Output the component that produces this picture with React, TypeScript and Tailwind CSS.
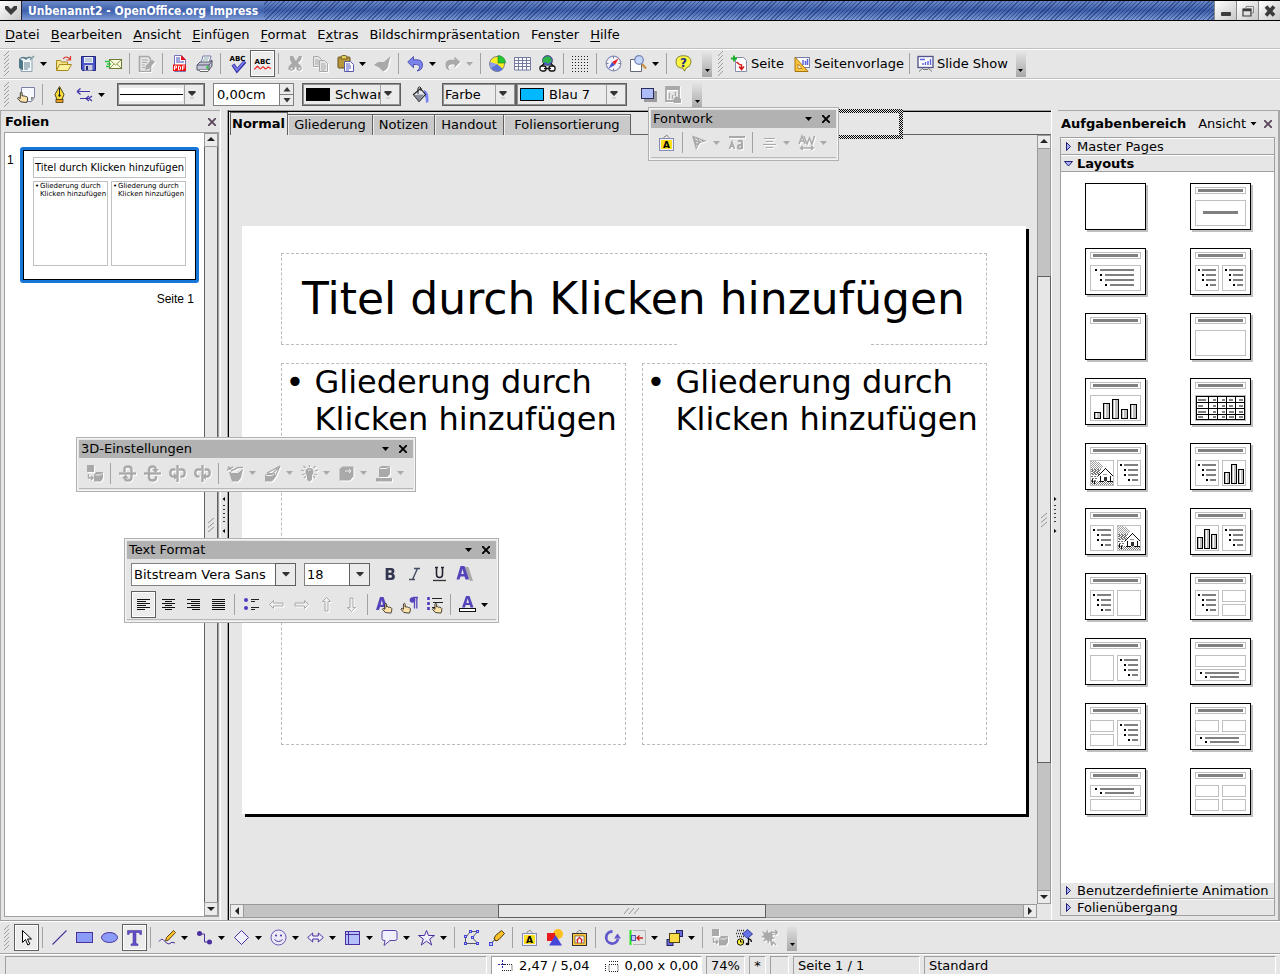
import type { ReactNode } from "react";

const G = "#a9a9a9";
const P = "#4a2f9e";
const B = "#8a9cf8";

const HAND = (
  <path
    d="M7.500 16.500L4 12.500l1-1 2 1.200V6.500l1-1 1 1v3.500l1-.5 1 .8 1-.3 1 .8 1-.2 1 1v3l-1 2.600z"
    fill="#ffe2a8"
    stroke="#111"
    strokeWidth=".9"
  />
);

const SIGN = (
  <>
    <path d="M5 4.500L8.500 1 12 4.500" fill="none" stroke="#444" strokeDasharray="1.500 .8" />
    <rect x="1.500" y="4.500" width="14" height="12" fill="#eef0ff" stroke="#888ab0" />
  </>
);

const CUBE_TO = (
  <>
    <rect x="1" y="0" width="7" height="7" fill={G} />
    <path d="M2.500 9v4h4M5 11l2 2-2 2" fill="none" stroke={G} strokeWidth="1.400" />
    <path d="M8 10l2-3h7v6l-2 3.500H8z" fill={G} />
    <path d="M9.500 10h5l2-2" fill="none" stroke="#eee" />
  </>
);

const ARROW_H = "M1.500 8.500l4-4v2.500h9.500v3H5.500v2.500z";

const icons: Record<string, ReactNode> = {
  newDoc: (
    <>
      <path d="M3 2.500h9l2 2v12H3z" fill="#f4f8fa" stroke="#8fa5b0" />
      <path d="M1 4q4-4 7-1 3-3 7 0-4-1-7 2-3-3-7-1z" fill="#5f8391" />
      <path d="M1 3.500l4 2.500v9.500l-4-2.500z" fill="#4d7686" />
      <path d="M6 8h6M6 10h6M6 12h6M6 14h4" stroke="#5f7f90" />
      <path d="M12 5l4-4" stroke="#7d99a4" strokeWidth="1.500" />
    </>
  ),
  open: (
    <>
      <path d="M1.500 15.500v-10h4l1 1.500h6v3" fill="#f6e58a" stroke="#a88a1c" />
      <path d="M1.500 15.500l3-6h12l-3.500 6z" fill="#fdf2a0" stroke="#a88a1c" />
      <path d="M8 4q3-4 7 0M15.500 1v4h-4" fill="none" stroke="#d6382a" strokeWidth="1.200" />
    </>
  ),
  save: (
    <>
      <path d="M1.500 1.500h14v14h-13l-1-1z" fill="#4a55c8" stroke="#23237c" />
      <rect x="4" y="2" width="9" height="6" fill="#e8ecff" />
      <path d="M5 4h7M5 6h7" stroke="#9aa" />
      <rect x="4.500" y="10" width="8" height="5.500" fill="#c8ccdc" />
      <rect x="6" y="11" width="2" height="4" fill="#24246c" />
    </>
  ),
  mail: (
    <>
      <rect x="4.500" y="4.500" width="12" height="9" fill="#fbfbe0" stroke="#6c7c38" />
      <path d="M5 5l5.500 5L16 5M5 13l4-4M16 13l-4-4" fill="none" stroke="#8a9a50" />
      <path d="M0 6.500h5M2 9h4M1 11.500h4" stroke="#27c43c" strokeWidth="1.400" />
    </>
  ),
  edit: (
    <>
      <path d="M1.500 1.500h9l2 2v13h-11z" fill="#e6e6e6" stroke={G} strokeWidth="1.600" />
      <path d="M4 5h6M4 7.500h5M4 10h3M4 12.500h3" stroke={G} />
      <path d="M7 15l1-4.500 6-6 3 2.500-6.500 7z" fill={G} />
    </>
  ),
  pdf: (
    <>
      <path d="M3.500.5h7l4 4v12h-11z" fill="#fff" stroke="#7773b8" />
      <path d="M10 0l5 5h-5z" fill="#e8121c" />
      <path d="M5 3h4M5 5h4M5 7h8" stroke="#4747b8" />
      <rect x="2" y="9.500" width="13" height="6.500" fill="#ee1111" />
      <path d="M3.500 15v-4h2v2h-2M7.500 11v4h1l1-1v-2l-1-1zM11.500 15v-4h2.500M11.500 13h2" fill="none" stroke="#fff" />
    </>
  ),
  print: (
    <>
      <path d="M5 8l2-7h8l-2 7z" fill="#fff" stroke="#7479a8" />
      <path d="M8 3h5M7 5h5" stroke="#8aa" />
      <path d="M1 10l3-3h9l3-2v6l-3 4H1z" fill="#c4c6d4" stroke="#55586c" />
      <path d="M1 10h12l3-4M13 10v5" fill="none" stroke="#55586c" />
      <path d="M3 15l1 1.500h8l1-1.500" fill="#fff" stroke="#666" />
      <circle cx="11.500" cy="12.500" r="1.200" fill="#1cc62c" />
    </>
  ),
  check: (
    <>
      <path d="M4 9.500l4 6 8-9" fill="none" stroke="#3232a0" strokeWidth="3.600" />
      <path d="M4.300 10l3.700 5 7.400-8.500" fill="none" stroke="#7d7df0" strokeWidth="1.800" />
    </>
  ),
  wave: (
    <path
      d="M0 14q1.500 0 2.500-2 1-1 2 0 1.500 3 3 1 1.500-2 2.500-.5 1.500 2.500 3 .5 1-1.500 2-.5l2 1"
      fill="none"
      stroke="#f02020"
      strokeWidth="1.200"
    />
  ),
  cut: (
    <>
      <path d="M3 1h3l3 5 3-5h3l-1 4-3 3 3 3 1 3-2 2-3-1-1-4-2 4-3 1-3-2 1-3 3-3-2-3z" fill={G} />
      <circle cx="4.500" cy="13.500" r="1" fill="#eee" />
      <circle cx="12.500" cy="13.500" r="1" fill="#eee" />
    </>
  ),
  copy: (
    <>
      <path d="M1.500 1.500h5l3 3v7h-8z" fill="#e6e6e6" stroke={G} />
      <path d="M3 5h4M3 7h4M3 9h4" stroke={G} />
      <path d="M7.500 5.500h5l3 3v8h-8z" fill="#e6e6e6" stroke={G} />
      <path d="M9 9h4M9 11h5M9 13h5M9 15h4" stroke={G} />
    </>
  ),
  paste: (
    <>
      <rect x="1" y="2" width="12" height="11" rx="1" fill="#b8963c" stroke="#66501a" />
      <path d="M4 3l1-2.500h4L10 3v1H4z" fill="#e2d058" stroke="#66501a" strokeWidth=".8" />
      <path d="M7.500 6.500h6l3 3v7h-9z" fill="#fff" stroke="#5858a8" />
      <path d="M9 9h4M9 11h5M9 13h5M9 15h3" stroke="#5858c8" />
    </>
  ),
  brush: <path d="M16.500 1l-2 8q0 5-5 7.500-2-1-4-3.500L0 10l4-3 6 0z" fill={G} />,
  undo: (
    <path
      d="M.7 7L6.500 1.500v3.300h4q5.500.5 5 6-.5 4.500-5.500 5.200 3-2 2.500-4.500-.5-2-3-2h-3v3.300z"
      fill="#7a84ea"
      stroke="#3c3ca4"
      strokeWidth=".8"
    />
  ),
  redo: (
    <path
      d="M16.300 7L10.500 1.500v3.300h-4q-5.500.5-5 6Q2 15.300 7 16q-3-2-2.500-4.500.5-2 3-2h3v3.300z"
      fill={G}
    />
  ),
  chart: (
    <>
      <circle cx="8" cy="9" r="7.500" fill="#fdee22" stroke="#667" strokeWidth=".8" />
      <path d="M8 9l6 5A8 8 0 0 1 1.500 13z" fill="#5a74d8" />
      <path d="M8 9L1.500 13A8 8 0 0 1 1 7z" fill="#8a9cf0" />
      <path d="M9 8V.5Q16 1 16.500 8z" fill="#22c832" stroke="#187820" strokeWidth=".6" />
    </>
  ),
  table: (
    <>
      <rect x="1" y="3" width="15" height="12" fill="#fff" />
      <path
        d="M.5 2.500h16v12.500H.5zM.5 5.500h16M.5 8.500h16M.5 11.500h16M4.500 2.500v12.500M8.500 2.500v12.500M12.500 2.500v12.500"
        fill="none"
        stroke="#7479a4"
      />
    </>
  ),
  link: (
    <>
      <circle cx="8.500" cy="5.500" r="5" fill="#4c5ad0" stroke="#223" strokeWidth=".6" />
      <path d="M4 4q3-4 7-2l2 4-4 3-2-2-3 1z" fill="#2cb444" />
      <g fill="#fff" stroke="#111" strokeWidth="1.300">
        <path d="M2 12l3-3.500M15 12l-3-3.500" fill="none" />
        <rect x="1" y="11" width="6" height="5" rx="2" />
        <rect x="10" y="11" width="6" height="5" rx="2" />
        <path d="M5 13.500h7" />
      </g>
    </>
  ),
  grid: (
    <g stroke="#222" strokeDasharray="1 2">
      <path d="M0 1.500h17M0 4.500h17M0 7.500h17M0 10.500h17M0 13.500h17M0 16.500h17" />
    </g>
  ),
  compass: (
    <>
      <circle cx="8.500" cy="8.500" r="7.300" fill="#f4f6ff" stroke="#8a90b4" strokeWidth="1.200" />
      <path d="M13.500 3.500L10 10 7 7z" fill="#e82222" />
      <path d="M3.500 13.500L7 7l3 3z" fill="#4a52d0" />
      <path d="M8.500 1.500v2M8.500 13.500v2M1.500 8.500h2M13.500 8.500h2" stroke="#778" />
    </>
  ),
  zoom: (
    <>
      <path d="M.5 4.500h8v3h3v9H.5z" fill="#fff" stroke="#667" />
      <path d="M12 9l4 4.500" stroke="#c89040" strokeWidth="2.200" />
      <circle cx="9" cy="5" r="4.300" fill="#c2d6fa" stroke="#7484b4" strokeWidth="1.200" />
    </>
  ),
  help: (
    <path
      d="M8.500.7q7.500 0 7.500 6.500 0 4-5 6l-1.500 3-1.500-3q-7 0-7-6.500Q1 .7 8.500.7z"
      fill="#fdf63c"
      stroke="#77772c"
      strokeWidth=".9"
    />
  ),
  slideNew: (
    <>
      <path d="M4.500 2.500h8l3 3v11h-11z" fill="#fff" stroke="#888ca8" />
      <path d="M0 3.500h6M3 .5v6" stroke="#18b028" strokeWidth="1.800" />
      <path d="M5.500 7q3 3 5 3v4M8 11.500l2.500 3 2.500-3" fill="none" stroke="#d41818" strokeWidth="1.500" />
    </>
  ),
  master: (
    <>
      <rect x="1.500" y="2.500" width="14" height="10" fill="#fff" stroke="#777ca8" />
      <path d="M9 10V5M11.500 10V6M13.500 10V4" stroke="#5a62dc" strokeWidth="1.500" />
      <path d="M1 16.500V2l13 14.500z" fill="#fac43c" stroke="#a87410" />
      <path d="M4 13.500V9l4 4.500z" fill="#fff" stroke="#a87410" strokeWidth=".8" />
    </>
  ),
  show: (
    <>
      <rect x="1" y="1.500" width="15" height="11" fill="#fff" stroke="#55588c" strokeWidth="1.400" />
      <path d="M3 4.500h5M6 10V8M8.500 10V7M11 10V6M13.500 10V4" stroke="#5a62dc" strokeWidth="1.400" />
      <path d="M6 13l-4 3.500M11 13l4 3.500M6 14.500h5" stroke="#777" fill="none" />
    </>
  ),
  styles: (
    <>
      <path d="M3.500 1.500h13v10l-3 4h-10z" fill="#f6f8fd" stroke="#7a80a4" />
      <path d="M16 11h-3v4z" fill="#888" />
      <g transform="translate(-4 1) scale(.9)">{HAND}</g>
    </>
  ),
  pen: (
    <>
      <path d="M8.500.5l4.500 8-2 5h-5l-2-5z" fill="#fbe03c" stroke="#4a3e10" />
      <path d="M8.500 2v8" stroke="#222" />
      <circle cx="8.500" cy="9.500" r="1.200" fill="#222" />
      <rect x="5" y="13.500" width="7" height="3" fill="#e89c28" stroke="#4a3e10" strokeWidth=".8" />
    </>
  ),
  ends: (
    <g fill="none" stroke="#4034a8" strokeWidth="1.200">
      <path d="M1 5.500h13M1 5.500l3.500-3M1 5.500l3.500 3" />
      <path d="M4 12.500h6M10 12.500l3-2.500M10 12.500l3 2.500M13 12.500l3-2.500M13 12.500l3 2.500M10 12.500h4" />
    </g>
  ),
  bucket: (
    <>
      <path d="M12 4q5 1 4.500 12l-2.500 1q0-6-2.500-9z" fill="#7884f4" />
      <path d="M1.500 8.500l7-6 5 6-6.500 7z" fill="#e4e6ec" stroke="#222" strokeWidth="1.100" />
      <path d="M2 9l10-.5-5 6.500z" fill="#888c98" />
      <path d="M6 8V2q1.500-2.500 3 0v3" fill="none" stroke="#222" />
    </>
  ),
  shadow: (
    <>
      <rect x="4" y="5" width="13" height="11" fill="#9a9aa0" />
      <rect x="1.500" y="2.500" width="12" height="10" fill="#aebcfa" stroke="#2a2e58" />
    </>
  ),
  interaction: (
    <>
      <path d="M1 1h13v14H1zM1 3h13" fill="none" stroke={G} strokeWidth="1.800" />
      <path d="M4.500 13V7M7.500 13V9M10.500 10V6" stroke={G} strokeWidth="1.500" />
      <path d="M8 14l3-4 5 3v4H9z" fill={G} />
    </>
  ),
  cursor: (
    <path d="M4.500 1.500v12l3-3 2.300 5.500 2-1-2.300-5h4z" fill="#fff" stroke="#000" strokeWidth="1" />
  ),
  line: <path d="M1.500 15.500l14-14" stroke={P} strokeWidth="1.100" />,
  rect: <rect x=".5" y="3.500" width="16" height="10" fill={B} stroke={P} />,
  ellipse: <ellipse cx="8.500" cy="8.500" rx="8" ry="5" fill={B} stroke={P} />,
  text: (
    <path
      d="M1.500 1.500h14v4h-1.500l-1-2H10v11l2 .5v1.500H5V15l2-.5v-11H4l-1 2H1.500z"
      fill="#6450c8"
      stroke="#3c2c90"
      strokeWidth=".5"
    />
  ),
  pencilCurve: (
    <>
      <path d="M0 12.500q3-4 5-1t5 3.500q3-3 6-1" fill="none" stroke={P} />
      <path d="M6.500 12l1-3.500 7-7 2 2-7 7.500z" fill="#fac02c" stroke="#4c3808" strokeWidth=".9" />
    </>
  ),
  connector: (
    <>
      <path d="M3.500 5h5v8h4" fill="none" stroke={P} />
      <circle cx="3.500" cy="4.500" r="2.500" fill={P} />
      <circle cx="13.500" cy="13" r="2.500" fill={P} />
    </>
  ),
  diamond: <path d="M8.500 1.500l7 7-7 7-7-7z" fill="#eef0ff" stroke={P} />,
  smiley: (
    <>
      <circle cx="8.500" cy="8.500" r="7.500" fill="#eceaf8" stroke="#6a54b4" />
      <circle cx="6" cy="6.500" r="1" fill={P} />
      <circle cx="11" cy="6.500" r="1" fill={P} />
      <path d="M4.500 10.500q4 4 8 0" fill="none" stroke={P} />
    </>
  ),
  arrows: (
    <path d="M.7 8.500l5-4.500v3h5.600V4l5 4.500-5 4.500v-3H5.700v3z" fill="#f2f2ff" stroke={P} />
  ),
  flow: (
    <>
      <rect x="1.500" y="2.500" width="14" height="13" fill="#b4c0fa" stroke={P} />
      <path d="M4.500 2.500v13M1.500 5.500h14" stroke={P} />
    </>
  ),
  callout: (
    <path
      d="M3 1.500h11q2 0 2 2v6q0 2-2 2H9l-6 5 1-5H3q-2 0-2-2v-6q0-2 2-2z"
      fill="#f0f0fc"
      stroke="#5c44ac"
    />
  ),
  star: (
    <path
      d="M8.500 1.500l2 5h6l-4.800 3.500 2 6-5.200-3.800-5.200 3.800 2-6L.5 6.500h6z"
      fill="#f0f0fc"
      stroke={P}
    />
  ),
  points: (
    <>
      <path d="M2.500 14.500h12l-5-6 5-6h-7l-5 6z" fill="none" stroke="#556" />
      <g fill="#c4ccff" stroke="#4444d8">
        <rect x="6.500" y="1.500" width="2" height="2" />
        <rect x="13.500" y="1.500" width="2" height="2" />
        <rect x="1.500" y="6.500" width="2" height="2" />
        <rect x="8.500" y="7.500" width="2" height="2" />
        <rect x="1.500" y="13.500" width="2" height="2" />
        <rect x="13.500" y="13.500" width="2" height="2" />
      </g>
    </>
  ),
  glue: (
    <>
      <path d="M6 10l1.500-3.500 6-5 3 3-5.500 6L8 12z" fill="#fac02c" stroke="#4c3808" />
      <path d="M7 10.500L3.500 14" stroke="#333" />
      <rect x="1.500" y="13.500" width="3" height="3" fill="#c4ccff" stroke="#4444d8" />
    </>
  ),
  sign: (
    <>
      {SIGN}
      <rect x="3" y="6" width="11" height="9" fill="#fde01c" />
    </>
  ),
  shapes: (
    <>
      <circle cx="12" cy="5" r="5" fill="#fcc020" />
      <rect x="1" y="4" width="8" height="8" fill="#e81c1c" />
      <path d="M9.500 6l6.500 10.500H3z" fill="#4848d8" />
    </>
  ),
  gallery: (
    <>
      {SIGN}
      <rect x="1.500" y="4.500" width="14" height="12" fill="#fcc83c" stroke="#333" />
      <rect x="4" y="7" width="9" height="7" fill="#fff" stroke="#333" strokeWidth=".6" />
      <path d="M5.500 11.500l3-3 3 3M6.500 11v3M10.500 11v3" fill="none" stroke="#d42020" strokeWidth="1.300" />
    </>
  ),
  rotate: (
    <>
      <path d="M8.500 2.500a6 6 0 1 0 5.500 7.500" fill="none" stroke="#6258cc" strokeWidth="2.800" />
      <path d="M10 9.500h7l-3.500-5z" fill="#6258cc" />
    </>
  ),
  align: (
    <>
      <path d="M1.500 1v15" stroke="#24e424" strokeWidth="2" />
      <path d="M4 1.500h12.500v14H4" fill="none" stroke="#b4b4b8" />
      <rect x="2.500" y="6.500" width="4" height="5" fill="#c4ccff" stroke="#5454b8" />
      <path d="M8 9h6M10.500 6.500L8 9l2.500 2.500" fill="none" stroke="#cc2020" strokeWidth="1.300" />
    </>
  ),
  order: (
    <>
      <rect x="10.500" y="1.500" width="6" height="6" fill="#6868dc" stroke="#22225c" />
      <rect x="1" y="10.500" width="6" height="6" fill="#6868dc" stroke="#22225c" />
      <rect x="3.500" y="4.500" width="10" height="9" fill="#fcdc44" stroke="#4c4414" />
    </>
  ),
  cubeTo: CUBE_TO,
  anim: (
    <>
      <path d="M1 1.500h7M0 4.500h7M1 7.500h7" stroke="#333" strokeDasharray="1 1" strokeWidth="1.300" />
      <path d="M11.500.5l5 4.500-5 4.500-5-4.500z" fill="#6474e8" stroke="#2c3890" />
      <circle cx="4.500" cy="13" r="3.200" fill="#fcf040" stroke="#111" />
      <path d="M4.500 11v2h2" fill="none" stroke="#111" />
      <path d="M12.500 15V9.500q3 1 3 3.500" fill="none" stroke="#111" strokeWidth="1.300" />
      <ellipse cx="11.500" cy="15" rx="1.800" ry="1.300" fill="#111" />
    </>
  ),
  effects: (
    <>
      <path
        d="M6 0l1.500 4L11 2l0 3 3 0-3 2 3 3-3 0 0 3-2-2-2 4-1-4-4 2 2-4-4-1 3-2-2-4 4 2z"
        fill={G}
      />
      <path d="M11 3.500h5M14 1l2.500 2.500L14 6M9 9l2 7 1-3 3 3" fill="none" stroke={G} strokeWidth="1.400" />
    </>
  ),
  bold: (
    <path
      fillRule="evenodd"
      d="M4 3h6q3.500 0 3.500 3 0 2-1.700 2.500 2.200.5 2.200 3 0 3.500-4 3.500H4zM7 5.200v2.500h2q1.500 0 1.500-1.300T9 5.200zM7 10v2.800h2.300q1.500 0 1.500-1.400T9.300 10z"
      fill="#32364e"
      transform="translate(1 -1) scale(.92 1)"
    />
  ),
  italic: <path d="M8 2.500h6M3 13.500h6M11.500 2.500l-5 11" stroke="#444c64" strokeWidth="1.400" fill="none" />,
  underline: (
    <>
      <path d="M4 1.500h3M10 1.500h3M5.500 1.500v6.500q0 3.500 3 3.500t3-3.500v-6.500" fill="none" stroke="#223" strokeWidth="1.600" />
      <path d="M2 14.500h13" stroke="#333" strokeWidth="1.300" />
    </>
  ),
  outlineA: (
    <>
      <path fillRule="evenodd" d="M9 1h3.500l4.500 14h-3l-1-2.500H10z" fill={G} />
      <path
        fillRule="evenodd"
        d="M4.500 0h4l4.500 13.500H9.500l-1-3h-4l-1 3H.5zM6.500 3l-1.300 5h2.600z"
        fill="#5444bc"
      />
    </>
  ),
  alignLeft: <path d="M2 3.500h13M2 5.500h9M2 7.500h13M2 9.500h9M2 11.500h13M2 13.500h8" stroke="#111" />,
  alignCenter: <path d="M2 3.500h13M5 5.500h7M2 7.500h13M5 9.500h7M2 11.500h13M5 13.500h7" stroke="#111" />,
  alignRight: <path d="M2 3.500h13M6 5.500h9M2 7.500h13M6 9.500h9M2 11.500h13M7 13.500h8" stroke="#111" />,
  justify: <path d="M2 3.500h13M2 5.500h13M2 7.500h13M2 9.500h13M2 11.500h13M2 13.500h13" stroke="#111" />,
  bullets: (
    <>
      <circle cx="3" cy="4" r="2" fill="#4c3cc4" />
      <circle cx="3" cy="12" r="2" fill="#4c3cc4" />
      <path d="M8 3.500h8M8 5.500h4M8 11.500h8M8 13.500h4" stroke="#222" />
    </>
  ),
  left: <path d={ARROW_H} fill="#f0f0f0" stroke={G} />,
  right: <path d={ARROW_H} fill="#f0f0f0" stroke={G} transform="rotate(180 8.500 8.500)" />,
  up: <path d={ARROW_H} fill="#f0f0f0" stroke={G} transform="rotate(90 8.500 8.500)" />,
  down: <path d={ARROW_H} fill="#f0f0f0" stroke={G} transform="rotate(270 8.500 8.500)" />,
  charHand: (
    <>
      <path fillRule="evenodd" d="M4 1h3.500l4.500 13H9l-1-3H4l-1 3H0zM5.800 4l-1.200 4.800h2.400z" fill="#5444bc" />
      <g transform="translate(3 2.500) scale(.85)">{HAND}</g>
    </>
  ),
  paraHand: (
    <>
      <path d="M12 1.500h5M13.500 1.500v11M15.800 1.500v11" stroke="#5444bc" strokeWidth="1.300" />
      <circle cx="11.500" cy="4" r="2.800" fill="#5444bc" />
      <g transform="translate(-3.500 2.500) scale(.85)">{HAND}</g>
    </>
  ),
  listHand: (
    <>
      <path d="M2.500 1v3M2.500 6v3M2.500 11v3" stroke="#4c3cc4" strokeWidth="2.600" />
      <path d="M6 2.500h10M7 6.500h10M6 11.500h4" stroke="#222" />
      <g transform="translate(3 2.500) scale(.85)">{HAND}</g>
    </>
  ),
  fontColor: (
    <>
      <path fillRule="evenodd" d="M7 0h3.500l4 11.500h-3l-.7-2.500H6.700L6 11.500H3zM8.700 2.500L7.400 7h2.600z" fill="#5444bc" />
      <rect x=".5" y="12.500" width="16" height="3" fill="#fff" stroke="#111" />
    </>
  ),
  tiltDown: (
    <>
      <path d="M0 8.500h17" stroke={G} strokeWidth="2.400" />
      <path d="M5.500 7V4q0-2.500 3.500-2.500t3.500 3v8q0 3-3.500 3t-3-2.500" fill="none" stroke={G} strokeWidth="2.400" />
      <path d="M3 13.500l3.500-4 3.500 4z" fill={G} />
    </>
  ),
  tiltUp: (
    <>
      <path d="M0 8.500h17" stroke={G} strokeWidth="2.400" />
      <path d="M11.500 4q0-2.500-3-2.500T5 4.500v8q0 3 3.500 3t3.500-3V11" fill="none" stroke={G} strokeWidth="2.400" />
      <path d="M8 4l3.500 4L15 4z" fill={G} />
    </>
  ),
  tiltLeft: (
    <>
      <path d="M8.500 0v17" stroke={G} strokeWidth="2.400" />
      <path d="M6.500 4.500H4q-2.700 0-2.700 3.500T4 11.500h2M10 4.500h3q2.700 0 2.700 3.500T13 11.500h-1.500" fill="none" stroke={G} strokeWidth="2.400" />
      <path d="M5 8v7l4-3.500z" fill={G} />
    </>
  ),
  tiltRight: (
    <>
      <path d="M8.500 0v17" stroke={G} strokeWidth="2.400" />
      <path d="M10.500 4.500H13q2.700 0 2.700 3.500T13 11.500h-2M7 4.500H4Q1.300 4.500 1.300 8T4 11.500h1.500" fill="none" stroke={G} strokeWidth="2.400" />
      <path d="M12 8v7l-4-3.500z" fill={G} />
    </>
  ),
  depth: (
    <>
      <path d="M2 7h9l5-3-2 9-3 3.500H5z" fill={G} />
      <path d="M0 5l6-3M4 6l7-3.500h5M1 1.500l3 3" fill="none" stroke={G} strokeWidth="1.600" />
      <path d="M4 7.500h7l3-2.500" fill="none" stroke="#eee" />
    </>
  ),
  direction: (
    <>
      <path d="M1 10l3-2h7v5l-3 3.500H1z" fill={G} />
      <path d="M3 8L16 1 9 8M11 12l5-11" fill="none" stroke={G} strokeWidth="1.300" />
      <path d="M2 10.500h6l2-1.500" fill="none" stroke="#eee" />
    </>
  ),
  lighting: (
    <>
      <path d="M8.500 3q4 0 4 4 0 2-1.500 3.500v4l-2 2h-1l-2-2v-4Q4.500 9 4.500 7q0-4 4-4z" fill={G} />
      <path
        d="M8.500 0v2M2.500 1l2 2M14.500 1l-2 2M0 5l3 1M17 5l-3 1M1 10l3-1M16 10l-3-1M3 13l2-2M14 13l-2-2"
        stroke={G}
        strokeWidth="1.200"
      />
      <path d="M7 6q1-1.500 2.500-1" fill="none" stroke="#eee" />
    </>
  ),
  surface: (
    <>
      <path d="M1.500 4l3-2.500h11v10l-3.500 4H1.500z" fill={G} />
      <path d="M7 6h6M11 4l2 2-2 2" fill="none" stroke="#eee" />
    </>
  ),
  color3d: (
    <>
      <path d="M4 3l2-2h9v8l-2.500 3H4z" fill={G} />
      <path d="M5 3.500h7l2-2" fill="none" stroke="#eee" />
      <rect x="1" y="13" width="16" height="3.500" fill={G} />
    </>
  ),
  fwShape: (
    <>
      <path d="M1 1.500L16 7 9 9l-4 7z" fill={G} />
      <path d="M4 4.500l3 2M8 5.500l3 2M5 9l2-1M5 12l1.500-.5" stroke="#eee" />
    </>
  ),
  fwHeight: (
    <>
      <path d="M1 3h16" stroke={G} strokeWidth="2" />
      <path d="M1.500 15L4 8l2.500 7M2.300 12.500h3.500" fill="none" stroke={G} strokeWidth="1.700" />
      <path d="M10 7.500q4-2 4 1.500v6M14 11q-4-.5-4 2t4 1" fill="none" stroke={G} strokeWidth="2.200" />
    </>
  ),
  fwAlign: <path d="M3 4.500h11M5 7.500h7M2 10.500h13M5 13.500h7" stroke={G} strokeWidth="1.200" />,
  fwSpacing: (
    <>
      <path d="M1 10l3-8 3 8M2 7h4M6 2l3 8 2.500-6L14 10l2.500-8" fill="none" stroke={G} strokeWidth="1.500" />
      <path d="M3 14h12M5 12l-2.500 2L5 16M13 12l2.500 2-2.500 2" fill="none" stroke={G} strokeWidth="1.300" />
    </>
  ),
};

const SHEER = "drop-shadow-[1px_1px_0_#fff]";

function Tool({
  icon,
  label,
  off = false,
  pressed = false,
  caption,
}: {
  icon: string;
  label: string;
  off?: boolean;
  pressed?: boolean;
  caption?: ReactNode;
}) {
  return (
    <button
      type="button"
      aria-label={label}
      aria-pressed={pressed}
      className={
        pressed
          ? "flex h-[27px] w-[25px] shrink-0 items-center justify-center border border-[#606060] bg-[#ececec] outline-1 -outline-offset-2 outline-white"
          : "flex h-[27px] w-[25px] shrink-0 items-center justify-center"
      }
    >
      <svg viewBox="0 0 17 17" className={off ? `size-[17px] ${SHEER}` : "size-[17px] overflow-visible"}>
        {icons[icon]}
        {caption}
      </svg>
    </button>
  );
}

function Drop({ off = false, label }: { off?: boolean; label: string }) {
  return (
    <button type="button" aria-label={`${label} Auswahl`} className="flex h-[27px] w-3 shrink-0 items-center justify-start pl-px">
      <svg viewBox="0 0 7 4" className="h-1 w-[7px]">
        <path d="M0 0h7L3.500 4z" fill={off ? G : "#000"} />
      </svg>
    </button>
  );
}

function Sep() {
  return <span className="ml-[3px] mr-1 h-[21px] w-px shrink-0 bg-[#a2a2a2]" />;
}

function Grip() {
  return (
    <svg viewBox="0 0 5 26" className="ml-1 mr-[5px] h-[26px] w-[5px] shrink-0">
      <path
        d="M0 5l5-5M0 9l5-5M0 13l5-5M0 17l5-5M0 21l5-5M0 25l5-5"
        stroke="#8c8c8c"
        strokeWidth=".8"
      />
    </svg>
  );
}

function More() {
  return (
    <button
      type="button"
      aria-label="Weitere Symbole"
      className="flex h-[26px] w-[10px] shrink-0 items-end justify-center bg-linear-to-b from-[#e6e6e6] to-[#a8a8a8] pb-1"
    >
      <svg viewBox="0 0 7 4" className="h-1 w-[7px]">
        <path d="M1 0h5L3.500 3z" />
      </svg>
    </button>
  );
}

function Caret() {
  return (
    <svg viewBox="0 0 8 8" className="size-2">
      <path d="M.5 0h7v1.500L4 5 .5 1.500z" fill="#333" />
      <path d="M2 7h4" stroke="#bbb" />
    </svg>
  );
}

function Combo({ label, value, width, pad, children }: { label: string; value: string; width: string; pad: string; children?: ReactNode }) {
  return (
    <span className={`relative flex h-[23px] shrink-0 items-center border border-[#606060] bg-[#ebebeb] outline-1 -outline-offset-2 outline-[#909090] ${width}`}>
      <select aria-label={label} className={`h-full w-full appearance-none pr-[20px] ${pad}`}>
        <option>{value}</option>
      </select>
      {children}
      <span className="pointer-events-none absolute inset-y-px right-px flex w-[19px] items-center justify-start border-l border-[#a0a0a0] bg-[#ebebeb] pl-[3px]">
        <Caret />
      </span>
    </span>
  );
}

function FieldCombo({ label, value, width }: { label: string; value: string; width: string }) {
  return (
    <span className={`relative flex h-[23px] shrink-0 border border-[#808080] bg-white ${width}`}>
      <select aria-label={label} className="h-full w-full appearance-none pl-[2px] pr-[21px]">
        <option>{value}</option>
      </select>
      <span className="pointer-events-none absolute -inset-y-px -right-px flex w-[21px] items-center justify-center border border-[#606060] bg-[#ebebeb]">
        <svg viewBox="0 0 8 5" className="h-[5px] w-2">
          <path d="M.5 0h7v1L4 4.500.5 1z" fill="#333" />
        </svg>
      </span>
    </span>
  );
}

const menus: [string, string, string][] = [
  ["", "D", "atei"],
  ["", "B", "earbeiten"],
  ["", "A", "nsicht"],
  ["", "E", "infügen"],
  ["", "F", "ormat"],
  ["E", "x", "tras"],
  ["Bildschirm", "p", "räsentation"],
  ["Fen", "s", "ter"],
  ["", "H", "ilfe"],
];

function WinButton({ label, children }: { label: string; children: ReactNode }) {
  return (
    <button
      type="button"
      aria-label={label}
      className="flex w-[22px] items-center justify-center border-l border-[#888] bg-linear-to-br from-white to-[#c8c8c8]"
    >
      <svg viewBox="0 0 12 12" className="size-3">
        {children}
      </svg>
    </button>
  );
}

function TitleBar() {
  return (
    <header className="flex h-[21px] shrink-0 border-y border-black bg-linear-to-b from-[#6c8ac8] via-[#3e60ac] to-[#7c9ad6]">
      <button
        type="button"
        aria-label="Fenstermenü"
        className="flex w-[22px] items-center justify-center border-r border-[#223] bg-linear-to-br from-white to-[#c8c8c8]"
      >
        <svg viewBox="0 0 12 9" className="h-[9px] w-3">
          <path d="M0 0h3l3 3 3-3h3v3L6 9 0 3z" fill="#3c3c3c" />
        </svg>
      </button>
      <h1 className="px-1.5 font-['DejaVu_Sans_Condensed','DejaVu_Sans',sans-serif] text-[12px] font-bold leading-[21px] text-white">
        Unbenannt2 - OpenOffice.org Impress
      </h1>
      <span className="flex-1 bg-[repeating-linear-gradient(135deg,transparent_0_2px,rgba(16,36,96,0.5)_2px_3px)]" />
      <WinButton label="Minimieren">
        <rect x="1" y="7" width="10" height="4" rx="1" fill="#3c3c3c" />
      </WinButton>
      <WinButton label="Wiederherstellen">
        <path d="M4 3V1.500h7.500V8H10" fill="none" stroke="#888" />
        <path d="M1 4h8v7H1z" fill="none" stroke="#3c3c3c" strokeWidth="1.200" />
        <path d="M1 5h8" stroke="#3c3c3c" strokeWidth="2.500" />
      </WinButton>
      <WinButton label="Schließen">
        <path d="M2 1.500l8 9M10 1.500l-8 9" stroke="#3c3c3c" strokeWidth="3.600" />
      </WinButton>
    </header>
  );
}

function MenuBar() {
  return (
    <nav className="flex h-[28px] shrink-0 items-center gap-[11px] border-b border-[#c0c0c0] pl-[5px] shadow-[0_1px_0_#fff]">
      {menus.map(([a, b, c]) => (
        <button type="button" key={a + b + c}>
          {a}
          <u className="underline-offset-2">{b}</u>
          {c}
        </button>
      ))}
    </nav>
  );
}

const abcText = (y: number) => (
  <text x="8.500" y={y} textAnchor="middle" fontSize="7" fontWeight="700">
    ABC
  </text>
);

function LabelTool({ icon, children }: { icon: string; children: string }) {
  return (
    <button type="button" className="flex h-[27px] items-center gap-[3px] pl-[3px]">
      <svg viewBox="0 0 17 17" className="size-[17px]">
        {icons[icon]}
      </svg>
      {children}
    </button>
  );
}

function StandardBar() {
  return (
    <div role="toolbar" className="flex h-[30px] shrink-0 items-center border-b border-[#c0c0c0] shadow-[0_1px_0_#fff]">
      <Grip />
      <Tool icon="newDoc" label="Neu" />
      <Drop label="Neu" />
      <Tool icon="open" label="Öffnen" />
      <Tool icon="save" label="Speichern" />
      <Tool icon="mail" label="E-Mail" />
      <Sep />
      <Tool icon="edit" label="Datei bearbeiten" off />
      <Sep />
      <Tool icon="pdf" label="PDF" />
      <Tool icon="print" label="Drucken" />
      <Sep />
      <Tool icon="check" label="Rechtschreibprüfung" caption={abcText(6)} />
      <Tool icon="wave" label="Automatische Prüfung" pressed caption={abcText(9)} />
      <Sep />
      <Tool icon="cut" label="Ausschneiden" off />
      <Tool icon="copy" label="Kopieren" off />
      <Tool icon="paste" label="Einfügen" />
      <Drop label="Einfügen" />
      <Tool icon="brush" label="Format übertragen" off />
      <Sep />
      <Tool icon="undo" label="Rückgängig" />
      <Drop label="Rückgängig" />
      <Tool icon="redo" label="Wiederherstellen" off />
      <Drop label="Wiederherstellen" off />
      <Sep />
      <Tool icon="chart" label="Diagramm" />
      <Tool icon="table" label="Tabelle" />
      <Tool icon="link" label="Hyperlink" />
      <Sep />
      <Tool icon="grid" label="Raster" />
      <Sep />
      <Tool icon="compass" label="Navigator" />
      <Tool icon="zoom" label="Maßstab" />
      <Drop label="Maßstab" />
      <Sep />
      <Tool
        icon="help"
        label="Hilfe"
        caption={
          <text x="8.500" y="11.500" textAnchor="middle" fontSize="12" fontWeight="700" fill="#223080">
            ?
          </text>
        }
      />
      <span className="w-1.5" />
      <More />
      <span className="w-0.5" />
      <Grip />
      <LabelTool icon="slideNew">Seite</LabelTool>
      <span className="w-[7px]" />
      <LabelTool icon="master">Seitenvorlage</LabelTool>
      <span className="w-0.5" />
      <Sep />
      <LabelTool icon="show">Slide Show</LabelTool>
      <span className="w-2" />
      <More />
    </div>
  );
}

function LineBar() {
  return (
    <div role="toolbar" className="flex h-[31px] shrink-0 items-center">
      <Grip />
      <Tool icon="styles" label="Formatvorlagen" />
      <Sep />
      <Tool icon="pen" label="Linie" />
      <Tool icon="ends" label="Linienenden" />
      <Drop label="Linienenden" />
      <span className="w-2" />
      <Combo label="Linienstil" value="" width="w-[88px]" pad="pl-1">
        <span className="pointer-events-none absolute inset-y-1 left-0.5 right-[21px] flex items-center bg-white">
          <span className="h-px w-full bg-black" />
        </span>
      </Combo>
      <span className="w-2" />
      <span className="flex h-[23px] w-[81px] shrink-0 border border-[#808080] bg-white">
        <input aria-label="Linienbreite" defaultValue="0,00cm" className="min-w-0 flex-1 pl-[3px]" />
        <span className="flex w-[14px] flex-col border-l border-[#808080]">
          <button type="button" aria-label="Mehr" className="flex flex-1 items-center justify-center border-b border-[#808080] bg-[#ebebeb]">
            <svg viewBox="0 0 8 5" className="h-[5px] w-2"><path d="M.5 4.500h7L4 0z" fill="#333" /></svg>
          </button>
          <button type="button" aria-label="Weniger" className="flex flex-1 items-center justify-center bg-[#ebebeb]">
            <svg viewBox="0 0 8 5" className="h-[5px] w-2"><path d="M.5 0h7L4 4.500z" fill="#333" /></svg>
          </button>
        </span>
      </span>
      <span className="w-2" />
      <Combo label="Linienfarbe" value="Schwarz" width="w-[99px]" pad="pl-8">
        <span className="pointer-events-none absolute left-[3px] h-[13px] w-6 bg-black" />
      </Combo>
      <span className="w-[7px]" />
      <Tool icon="bucket" label="Fläche" />
      <span className="w-[9px]" />
      <Combo label="Füllart" value="Farbe" width="w-[74px]" pad="pl-0.5" />
      <Combo label="Füllfarbe" value="Blau 7" width="w-[111px]" pad="pl-8">
        <span className="pointer-events-none absolute left-[3px] h-[13px] w-6 border border-black bg-[#00b8ff]" />
      </Combo>
      <span className="w-[9px]" />
      <Tool icon="shadow" label="Schatten" />
      <Tool icon="interaction" label="Interaktion" off />
      <span className="w-[6px]" />
      <More />
    </div>
  );
}

const arrowPath = {
  up: "M0 5h8L4 1z",
  down: "M0 2h8L4 6z",
  left: "M6 0v8L2 4z",
  right: "M2 0v8l4-4z",
};

function ScrollButton({ dir }: { dir: keyof typeof arrowPath }) {
  return (
    <button
      type="button"
      aria-label={`Bildlauf ${dir}`}
      className="flex size-[14px] shrink-0 items-center justify-center border border-[#9a9a9a] bg-[#ebebeb]"
    >
      <svg viewBox="0 0 8 8" className="size-2">
        <path d={arrowPath[dir]} fill="#222" />
      </svg>
    </button>
  );
}

function ThumbGrip() {
  return (
    <svg viewBox="0 0 8 14" className="h-[14px] w-2">
      <path d="M1 5l6-5M1 9.500l6-5M1 14l6-5" stroke="#8a8a8a" strokeWidth=".9" />
    </svg>
  );
}

function PreviewOutline() {
  return (
    <div className="flex min-w-0 flex-1 border border-[#c0c0c0] pl-px text-[7px] leading-2 text-black">
      <span className="w-[5px] shrink-0">•</span>
      <p className="whitespace-nowrap">
        Gliederung durch
        <br />
        Klicken hinzufügen
      </p>
    </div>
  );
}

function SlidePanel() {
  return (
    <aside className="flex w-[220px] shrink-0 flex-col border-l border-t border-[#a8a8a8] pb-[3px] pl-[3px] pr-px">
      <div className="flex h-[21px] items-center justify-between pl-px">
        <h2 className="font-bold">Folien</h2>
        <CloseButton color="#5c4a5c" />
      </div>
      <div className="flex flex-1 border border-[#a0a0a0] bg-white">
        <div className="flex flex-1 gap-1.5 pl-0.5 pt-[14px] font-['Liberation_Sans',sans-serif] text-[12px]">
          <span className="w-[7px] pt-[5px]">1</span>
          <div>
            <div className="h-[136px] w-[179px] rounded-[3px] border-[3px] border-[#1677d9] bg-white">
              <div className="flex h-full flex-col gap-[3px] border border-black px-[9px] pb-[13px] pt-1.5">
                <p className="flex h-[21px] items-center justify-center border border-[#c0c0c0] font-['DejaVu_Sans_Condensed','DejaVu_Sans',sans-serif] text-[11px] whitespace-nowrap">
                  Titel durch Klicken hinzufügen
                </p>
                <div className="flex flex-1 gap-[3px] font-['DejaVu_Sans',sans-serif]">
                  <PreviewOutline />
                  <PreviewOutline />
                </div>
              </div>
            </div>
            <p className="pr-[5px] pt-2 text-right">Seite 1</p>
          </div>
        </div>
        <div className="flex w-[14px] flex-col">
          <ScrollButton dir="up" />
          <div className="flex flex-1 items-center justify-center border-x border-[#606060] bg-[#e6e6e6]">
            <ThumbGrip />
          </div>
          <ScrollButton dir="down" />
        </div>
      </div>
    </aside>
  );
}

function CloseButton({ color = "#000" }: { color?: string }) {
  return (
    <button type="button" aria-label="Schließen" className="flex size-3.5 items-center justify-center">
      <svg viewBox="0 0 8 8" className="size-2">
        <path d="M0 0l8 8M8 0L0 8" stroke={color} strokeWidth="1.900" />
      </svg>
    </button>
  );
}

function Splitter({ dir }: { dir: "left" | "right" }) {
  return (
    <div
      className={
        dir === "left"
          ? "flex w-2 shrink-0 items-center justify-center border-l border-r border-l-white border-r-[#a0a0a0]"
          : "flex w-[7px] shrink-0 items-center justify-center border-l border-white"
      }
    >
      <svg viewBox="0 0 4 36" className="h-9 w-1">
        <path d={dir === "left" ? "M3 0v4L.5 2z" : "M1 0v4l2.500-2z"} />
        <path d={dir === "left" ? "M3 32v4L.5 34z" : "M1 32v4l2.500-2z"} />
        <path d="M2 8v20" stroke="#000" strokeWidth="1.500" strokeDasharray="1 3" />
      </svg>
    </div>
  );
}

const tabs: [string, string][] = [
  ["Gliederung", "w-[85px]"],
  ["Notizen", "w-[62px]"],
  ["Handout", "w-[69px]"],
  ["Foliensortierung", "w-[127px]"],
];

function Tabs() {
  return (
    <div role="tablist" className="flex h-6 shrink-0 border-t border-black">
      <button
        type="button"
        role="tab"
        aria-selected="true"
        className="ml-px w-[58px] border-r border-t border-[#606060] font-bold shadow-[inset_1px_0_0_#606060]"
      >
        Normal
      </button>
      {tabs.map(([name, width]) => (
        <button
          type="button"
          role="tab"
          aria-selected="false"
          key={name}
          className={`mt-0.5 border-r border-t border-[#606060] bg-[#c9c9c9] shadow-[inset_1px_1px_0_#eee] ${width}`}
        >
          {name}
        </button>
      ))}
      <span className="flex-1 border-b border-[#606060]" />
    </div>
  );
}

function Outline() {
  return (
    <div className="flex flex-1 border border-dashed border-[#bcbcbc] pl-1 text-[32px] leading-[37px]">
      <span className="w-[29px] shrink-0">•</span>
      <p className="whitespace-nowrap">
        Gliederung durch
        <br />
        Klicken hinzufügen
      </p>
    </div>
  );
}

function Slide() {
  return (
    <div className="flex h-[588px] w-[784px] shrink-0 flex-col bg-white px-[39px] pb-[69px] pt-[27px] shadow-[3px_3px_0_#000]">
      <div className="flex h-[92px] flex-col">
        <h2 className="flex flex-1 items-center justify-center border border-b-0 border-dashed border-[#bcbcbc] text-[44px] whitespace-nowrap">
          Titel durch Klicken hinzufügen
        </h2>
        <div className="flex h-px justify-between">
          <span className="w-[396px] border-t border-dashed border-[#bcbcbc]" />
          <span className="w-[116px] border-t border-dashed border-[#bcbcbc]" />
        </div>
      </div>
      <div className="mt-[18px] flex flex-1 gap-4">
        <Outline />
        <Outline />
      </div>
    </div>
  );
}

function Workspace() {
  return (
    <section className="flex min-w-0 flex-1 flex-col border-l border-t border-l-black border-t-[#a0a0a0] pb-0.5">
      <Tabs />
      <div className="flex min-h-0 flex-1 pl-px">
        <div className="flex min-w-0 flex-1 flex-col">
          <div className="flex min-h-0 flex-1 items-center justify-center overflow-hidden">
            <Slide />
          </div>
          <div className="flex h-[14px] shrink-0 bg-[#c3c3c3]">
            <ScrollButton dir="left" />
            <div className="flex flex-1 border-y border-[#9a9a9a]">
              <span className="flex-[254]" />
              <span className="-my-px flex flex-[267] items-center justify-center border border-[#606060] bg-[#e6e6e6]">
                <svg viewBox="0 0 16 6" className="h-1.5 w-4">
                  <path d="M0 6l5-6M5 6l5-6M10 6l5-6" stroke="#8a8a8a" strokeWidth=".9" />
                </svg>
              </span>
              <span className="flex-[257]" />
            </div>
            <ScrollButton dir="right" />
          </div>
        </div>
        <div className="mb-[14px] flex w-[14px] shrink-0 flex-col bg-[#c3c3c3]">
          <ScrollButton dir="up" />
          <div className="flex flex-1 flex-col border-x border-[#9a9a9a]">
            <span className="flex-[128]" />
            <span className="-mx-px flex flex-[486] items-center justify-center border border-[#606060] bg-[#e6e6e6]">
              <ThumbGrip />
            </span>
            <span className="flex-[128]" />
          </div>
          <ScrollButton dir="down" />
        </div>
      </div>
    </section>
  );
}

const Box = ({ x, y, w, h }: { x: number; y: number; w: number; h: number }) => (
  <rect x={x + 0.5} y={y + 0.5} width={w - 1} height={h - 1} fill="#fff" stroke="#c0c0c0" />
);

const Rows = ({ x, y, step, rows }: { x: number; y: number; step: number; rows: number[][] }) => (
  <>
    {rows.map(([dot, from, to], i) => (
      <g key={i}>
        <rect x={x + dot} y={y + i * step} width="2" height="2" />
        <rect x={x + from} y={y + i * step} width={to - from} height="2" fill="#808080" />
      </g>
    ))}
  </>
);

const List = ({ x }: { x: number }) => (
  <>
    <Box x={x} y={17} w={24} h={26} />
    <Rows x={x} y={21} step={5} rows={[[3, 7, 21], [7, 11, 21], [7, 11, 21], [11, 15, 21]]} />
  </>
);

const WideList = ({ y }: { y: number }) => (
  <>
    <Box x={5} y={y} w={51} h={12} />
    <Rows x={5} y={y + 3} step={4} rows={[[5, 10, 44], [10, 15, 44]]} />
  </>
);

const Bars = ({ bars, w }: { bars: number[][]; w: number }) => (
  <>
    {bars.map(([x, y]) => (
      <g key={x}>
        <rect x={x + 0.5} y={y + 0.5} width={w - 1} height={40 - y} fill="#c0c0c0" stroke="#000" />
        <rect x={x + 2} y={y + 1} width="1" height={39 - y} fill="#fff" />
      </g>
    ))}
  </>
);

const House = ({ x }: { x: number }) => (
  <g transform={`translate(${x} 17)`}>
    <Box x={0} y={0} w={24} h={26} />
    <g stroke="#a0a0a0" strokeDasharray="1 1">
      <path d="M1 1.500h5M2 2.500h7M1 3.500h9M2 4.500h10M1 5.500h12M2 6.500h12M1 7.500h12M2 8.500h10" />
    </g>
    <g stroke="#777" strokeDasharray="2 1">
      <path d="M1 9.500h10M2 10.500h9M1 11.500h9M3 12.500h7M1 13.500h8M2 14.500h7M1 16.500h7M2 18.500h6M1 20.500h6" />
    </g>
    <path d="M1 21.500h22M2 22.500h21M1 23.500h22M2 24.500h21" stroke="#808080" strokeDasharray="1 1" />
    <path d="M10 14.500l5.500-5 5.500 5V21H10z" fill="#fff" />
    <path d="M8 16h1v-1h1v-1h1v-1h1v-1h1v-1h1v-1h1V9h1v1h1v1h1v1h1v1h1v1h1v1h1v1h1v-1h-1v-1h-1v-1h-1v-1h-1v-1h-1v-1h-1V9h-1V8h-1v1h-1v1h-1v1h-1v1h-1v1h-1v1H9v1H8z" fill="#111" />
    <path d="M10.500 16v5M20.500 16v5M9 21.500h5M17 21.500h6M2.500 19v4M4.500 21v3" stroke="#111" />
    <rect x="14" y="17" width="3" height="4" fill="#333" />
    <rect x="13" y="14" width="4" height="1" fill="#999" />
  </g>
);

const Grid = () => (
  <>
    <Box x={5} y={17} w={51} h={26} />
    <path
      d="M6.500 18.500h48v23h-48zM6.500 24.500h48M6.500 30.500h48M6.500 36.500h48M18.500 18v24M27.500 18v24M36.500 18v24M45.500 18v24"
      fill="none"
      stroke="#000"
    />
    {[21, 27, 33, 38].map((y, i) => (
      <g key={y} fill="#808080">
        <rect x="8" y={y} width={i % 2 ? 5 : 8} height="2" />
        <rect x="23" y={y} width="3" height="2" />
        <rect x="32" y={y} width="3" height="2" />
        <rect x="39" y={y} width={i > 1 ? 5 : 4} height="2" />
        <rect x="49" y={y} width="4" height="2" />
      </g>
    ))}
  </>
);

const halfBars = (x: number) => [[x + 2, 29], [x + 9, 21], [x + 16, 26]];

const layouts: [string, ReactNode][] = [
  ["Leer", null],
  ["Titel", <><Box x={5} y={17} w={51} h={26} /><rect x="13" y="28" width="35" height="3" fill="#808080" /></>],
  ["Titel, Text", <><Box x={5} y={17} w={51} h={26} /><Rows x={5} y={21} step={5} rows={[[5, 10, 44], [10, 15, 44], [10, 15, 44], [15, 20, 44]]} /></>],
  ["Titel, zwei Texte", <><List x={5} /><List x={32} /></>],
  ["Nur Titel", <></>],
  ["Titel, Objekt", <Box x={5} y={17} w={51} h={26} />],
  ["Titel, Diagramm", <><Box x={5} y={17} w={51} h={26} /><Bars w={7} bars={[[9, 34], [18, 25], [27, 21], [36, 31], [45, 26]]} /></>],
  ["Titel, Tabelle", <Grid />],
  ["Titel, Clipart, Text", <><House x={5} /><List x={32} /></>],
  ["Titel, Text, Diagramm", <><List x={5} /><Box x={32} y={17} w={24} h={26} /><Bars w={6} bars={halfBars(32)} /></>],
  ["Titel, Text, Clipart", <><List x={5} /><House x={32} /></>],
  ["Titel, Diagramm, Text", <><Box x={5} y={17} w={24} h={26} /><Bars w={6} bars={halfBars(5)} /><List x={32} /></>],
  ["Titel, Text, Objekt", <><List x={5} /><Box x={32} y={17} w={24} h={26} /></>],
  ["Titel, Text, zwei Objekte", <><List x={5} /><Box x={32} y={17} w={24} h={12} /><Box x={32} y={31} w={24} h={12} /></>],
  ["Titel, Objekt, Text", <><Box x={5} y={17} w={24} h={26} /><List x={32} /></>],
  ["Titel, Objekt über Text", <><Box x={5} y={17} w={51} h={12} /><WideList y={31} /></>],
  ["Titel, zwei Objekte, Text", <><Box x={5} y={17} w={24} h={12} /><Box x={5} y={31} w={24} h={12} /><List x={32} /></>],
  ["Titel, zwei Objekte über Text", <><Box x={5} y={17} w={24} h={12} /><Box x={32} y={17} w={24} h={12} /><WideList y={31} /></>],
  ["Titel, Text über Objekt", <><WideList y={17} /><Box x={5} y={31} w={51} h={12} /></>],
  ["Titel, vier Objekte", <><Box x={5} y={17} w={24} h={12} /><Box x={32} y={17} w={24} h={12} /><Box x={5} y={31} w={24} h={12} /><Box x={32} y={31} w={24} h={12} /></>],
];

function TaskRow({ children, open = false }: { children: string; open?: boolean }) {
  return (
    <button
      type="button"
      aria-expanded={open}
      className={`flex h-[17px] shrink-0 items-center gap-1 border-b border-[#a0a0a0] bg-[#e6e6e6] pl-[3px] pt-px text-left shadow-[inset_0_1px_0_#fff] ${open ? "font-bold" : ""}`}
    >
      <svg viewBox="0 0 9 9" className="size-[9px]">
        {open ? (
          <path d="M.5 2.500h8L4.500 7z" fill="#a8b0ff" stroke="#20206c" />
        ) : (
          <path d="M2.500.5v8l4-4z" fill="#a8b0ff" stroke="#20206c" />
        )}
      </svg>
      {children}
    </button>
  );
}

function TaskPanel() {
  return (
    <aside className="flex w-[222px] shrink-0 flex-col border-r-2 border-t border-[#a8a8a8] pb-1 pl-0.5 pr-[3px]">
      <div className="flex h-[26px] items-center pl-px">
        <h2 className="font-bold">Aufgabenbereich</h2>
        <button type="button" className="ml-3 flex items-center gap-1">
          Ansicht
          <svg viewBox="0 0 7 4" className="h-1 w-[7px]"><path d="M.5 0h6L3.500 3.500z" /></svg>
        </button>
        <span className="flex-1" />
        <CloseButton color="#5c4a5c" />
      </div>
      <div className="flex flex-1 flex-col border border-b-0 border-[#a0a0a0] bg-white">
        <TaskRow>Master Pages</TaskRow>
        <TaskRow open>Layouts</TaskRow>
        <div className="grid flex-1 grid-cols-[63px_63px] content-start gap-x-[42px] gap-y-4 pl-6 pt-[11px]">
          {layouts.map(([name, art]) => (
            <button type="button" aria-label={name} key={name} className="h-[49px]">
              <svg viewBox="0 0 63 49" shapeRendering="crispEdges" className="h-[49px] w-[63px]">
                <rect x="2" y="2" width="61" height="47" fill="#c0c0c0" />
                <rect x=".5" y=".5" width="60" height="46" fill="#fff" stroke="#000" />
                {art && (
                  <>
                    <Box x={5} y={4} w={51} h={7} />
                    <rect x="8" y="6" width="45" height="3" fill="#808080" />
                    {art}
                  </>
                )}
              </svg>
            </button>
          ))}
        </div>
        <TaskRow>Benutzerdefinierte Animation</TaskRow>
        <TaskRow>Folienübergang</TaskRow>
      </div>
    </aside>
  );
}

function FloatingBar({ title, place, children }: { title: string; place: string; children: ReactNode }) {
  return (
    <section className={`absolute border border-[#b0b0b0] bg-[#e6e6e6] p-0.5 shadow-[inset_0_0_0_1px_#f4f4f4] ${place}`}>
      <header className="flex h-[18px] items-center bg-[#b2b2b2] pl-0.5 pr-[3px]">
        <h3 className="flex-1">{title}</h3>
        <Drop label={title} />
        <span className="w-[3px]" />
        <CloseButton />
      </header>
      <div className="border-b border-[#b8b8b8] px-[3px]">{children}</div>
    </section>
  );
}

const signA = (
  <text x="8.500" y="14" textAnchor="middle" fontSize="9" fontWeight="700">
    A
  </text>
);

function Fontwork() {
  return (
    <FloatingBar title="Fontwork" place="left-[648px] top-[107px] w-[191px]">
      <div className="flex h-[29px] items-center">
        <Tool icon="sign" label="Fontwork Gallery" caption={signA} />
        <Sep />
        <Tool icon="fwShape" label="Form" off />
        <Drop label="Form" off />
        <Tool icon="fwHeight" label="Gleiche Buchstabenhöhe" off />
        <Sep />
        <Tool icon="fwAlign" label="Ausrichtung" off />
        <Drop label="Ausrichtung" off />
        <Tool icon="fwSpacing" label="Zeichenabstand" off />
        <Drop label="Zeichenabstand" off />
      </div>
    </FloatingBar>
  );
}

function Settings3D() {
  return (
    <FloatingBar title="3D-Einstellungen" place="left-[76px] top-[437px] w-[340px]">
      <div className="flex h-[30px] items-center">
        <Tool icon="cubeTo" label="Extrusion" off />
        <Sep />
        <Tool icon="tiltDown" label="Nach unten kippen" off />
        <Tool icon="tiltUp" label="Nach oben kippen" off />
        <Tool icon="tiltLeft" label="Nach links kippen" off />
        <Tool icon="tiltRight" label="Nach rechts kippen" off />
        <Sep />
        {[
          ["depth", "Tiefe"],
          ["direction", "Richtung"],
          ["lighting", "Beleuchtung"],
          ["surface", "Oberfläche"],
          ["color3d", "3D-Farbe"],
        ].map(([icon, label]) => (
          <span key={icon} className="flex">
            <Tool icon={icon} label={label} off />
            <Drop label={label} off />
          </span>
        ))}
      </div>
    </FloatingBar>
  );
}

function TextFormat() {
  return (
    <FloatingBar title="Text Format" place="left-[124px] top-[538px] w-[375px]">
      <div className="flex h-[31px] items-center pl-px">
        <FieldCombo label="Schriftart" value="Bitstream Vera Sans" width="w-[165px]" />
        <span className="w-2" />
        <FieldCombo label="Schriftgröße" value="18" width="w-[66px]" />
        <span className="w-[7px]" />
        <Tool icon="bold" label="Fett" />
        <Tool icon="italic" label="Kursiv" />
        <Tool icon="underline" label="Unterstrichen" />
        <Tool icon="outlineA" label="Schatten" />
      </div>
      <div className="flex h-[29px] items-center pl-px">
        <Tool icon="alignLeft" label="Linksbündig" pressed />
        <Tool icon="alignCenter" label="Zentriert" />
        <Tool icon="alignRight" label="Rechtsbündig" />
        <Tool icon="justify" label="Blocksatz" />
        <Sep />
        <Tool icon="bullets" label="Aufzählung" />
        <Tool icon="left" label="Höher stufen" off />
        <Tool icon="right" label="Tiefer stufen" off />
        <Tool icon="up" label="Nach oben" off />
        <Tool icon="down" label="Nach unten" off />
        <Sep />
        <Tool icon="charHand" label="Zeichen" />
        <Tool icon="paraHand" label="Absatz" />
        <Tool icon="listHand" label="Nummerierung" />
        <Sep />
        <Tool icon="fontColor" label="Schriftfarbe" />
        <Drop label="Schriftfarbe" />
      </div>
    </FloatingBar>
  );
}

function DrawingBar() {
  return (
    <div role="toolbar" className="flex h-[32px] shrink-0 items-center border-t border-white">
      <Grip />
      <Tool icon="cursor" label="Auswahl" pressed />
      <Sep />
      <Tool icon="line" label="Linie" />
      <Tool icon="rect" label="Rechteck" />
      <Tool icon="ellipse" label="Ellipse" />
      <Tool icon="text" label="Text" pressed />
      <Sep />
      {[
        ["pencilCurve", "Kurve"],
        ["connector", "Verbinder"],
        ["diamond", "Standardformen"],
        ["smiley", "Symbolformen"],
        ["arrows", "Blockpfeile"],
        ["flow", "Flussdiagramme"],
        ["callout", "Legenden"],
        ["star", "Sterne"],
      ].map(([icon, label]) => (
        <span key={icon} className="flex">
          <Tool icon={icon} label={label} />
          <Drop label={label} />
        </span>
      ))}
      <Sep />
      <Tool icon="points" label="Punkte bearbeiten" />
      <Tool icon="glue" label="Klebepunkte" />
      <Sep />
      <Tool icon="sign" label="Fontwork" caption={signA} />
      <Tool icon="shapes" label="Aus Datei" />
      <Tool icon="gallery" label="Gallery" />
      <Sep />
      <Tool icon="rotate" label="Drehen" />
      <Tool icon="align" label="Ausrichtung" />
      <Drop label="Ausrichtung" />
      <Tool icon="order" label="Anordnung" />
      <Drop label="Anordnung" />
      <Sep />
      <Tool icon="cubeTo" label="Extrusion" off />
      <Tool icon="anim" label="Benutzerdefinierte Animation" />
      <Tool icon="effects" label="Interaktion" off />
      <span className="w-[5px]" />
      <More />
    </div>
  );
}

const CELL = "flex items-center border-l border-t border-[#a0a0a0] border-r border-r-white whitespace-nowrap";

function StatusBar() {
  return (
    <footer className="flex h-[21px] shrink-0 gap-1 border-t border-[#a0a0a0] pl-[5px] pr-1 pt-0.5 shadow-[inset_0_1px_0_#fff]">
      <span className={`${CELL} w-[482px]`} />
      <span className={`${CELL} w-[211px] bg-white pl-1.5`}>
        <svg viewBox="0 0 15 12" className="mr-1.5 h-3 w-[15px]">
          <path d="M4.500 0v9M0 4.500h9" stroke="#2828a8" strokeDasharray="2 1" />
          <path d="M5 4.500h9v6H4" fill="none" stroke="#222" strokeDasharray="1 1" />
        </svg>
        2,47 / 5,04
        <svg viewBox="0 0 15 12" className="ml-[14px] mr-1.5 h-3 w-[15px]">
          <path d="M5 1.500h9M1.500 4v7M5 4.500h9v7H5z" fill="none" stroke="#222" strokeDasharray="1 1" />
        </svg>
        0,00 x 0,00
      </span>
      <span className={`${CELL} w-[39px] pl-1`}>74%</span>
      <span className={`${CELL} w-[17px] justify-center`}>*</span>
      <span className={`${CELL} w-[19px]`} />
      <span className={`${CELL} w-[127px] pl-1`}>Seite 1 / 1</span>
      <span className={`${CELL} flex-1 pl-1`}>Standard</span>
    </footer>
  );
}

export default function App() {
  return (
    <div className="relative flex h-screen w-full flex-col overflow-hidden bg-[#e6e6e6] font-['DejaVu_Sans',sans-serif] text-[13px] leading-4 text-black">
      <TitleBar />
      <MenuBar />
      <StandardBar />
      <LineBar />
      <main className="flex min-h-0 flex-1 border-b border-[#a0a0a0]">
        <SlidePanel />
        <Splitter dir="left" />
        <Workspace />
        <Splitter dir="right" />
        <TaskPanel />
      </main>
      <DrawingBar />
      <StatusBar />
      <div className="absolute left-[650px] top-[109px] h-[30px] w-[253px] bg-[repeating-conic-gradient(#000_0_25%,#e6e6e6_0_50%)] bg-[length:2px_2px] p-1">
        <div className="h-full bg-[#e6e6e6]" />
      </div>
      <Fontwork />
      <Settings3D />
      <TextFormat />
    </div>
  );
}
